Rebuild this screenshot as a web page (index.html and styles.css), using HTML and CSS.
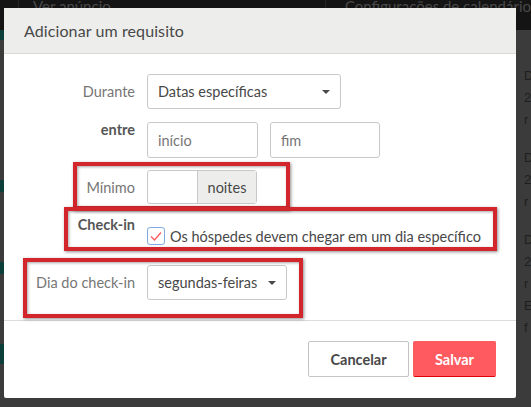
FILE: index.html
```html
<!DOCTYPE html>
<html lang="pt">
<head>
<meta charset="utf-8">
<title>Adicionar um requisito</title>
<link rel="stylesheet" href="styles.css">
</head>
<body>
<div class="page">
  <div class="topbar">
    <span class="tb-left">Ver anúncio</span>
    <span class="tb-right">Configurações de calendário</span>
  </div>
  <div class="pagebody">
    <div class="leftcol">
      <div class="stripe s1"></div>
      <div class="stripe s2"></div>
      <div class="stripe s3"></div>
      <div class="stripe s4"></div>
    </div>
    <div class="rightcol">
      <p>D</p><p>2</p><p>r</p>
      <p class="sep">D</p><p>2</p><p>r</p>
      <p class="sep">D</p><p>2</p><p>r</p><p>E</p><p>f</p>
    </div>
  </div>
</div>

<div class="modal">
  <div class="modal-header">Adicionar um requisito</div>
  <div class="modal-body">
    <div class="row r1">
      <label class="lbl">Durante</label>
      <div class="select sel-wide">Datas específicas<span class="caret"></span></div>
    </div>
    <div class="row r2">
      <label class="lbl bold top">entre</label>
      <div class="ctl pair">
        <div class="input in-start">início</div>
        <div class="input in-end">fim</div>
      </div>
    </div>
    <div class="row r3">
      <label class="lbl">Mínimo</label>
      <div class="group">
        <div class="group-input"></div>
        <div class="group-addon">noites</div>
      </div>
    </div>
    <div class="row r4">
      <label class="lbl bold top">Check-in</label>
      <div class="ctl check">
        <span class="box"><svg width="14" height="12" viewBox="0 0 14 12"><path d="M2 6.5 L5.5 10 L12 2.5" fill="none" stroke="#ff5a5f" stroke-width="1.3"/></svg></span>
        <span class="check-text">Os hóspedes devem chegar em um dia específico</span>
      </div>
    </div>
    <div class="row r5">
      <label class="lbl">Dia do check-in</label>
      <div class="select sel-narrow">segundas-feiras<span class="caret"></span></div>
    </div>
  </div>
  <div class="modal-footer">
    <button class="btn btn-cancel">Cancelar</button>
    <button class="btn btn-save">Salvar</button>
  </div>
</div>

<div class="mark m1"></div>
<div class="mark m2"></div>
<div class="mark m3"></div>
</body>
</html>
```

FILE: styles.css
```css
html, body {
  margin: 0;
  padding: 0;
}
body {
  width: 531px;
  height: 407px;
  overflow: hidden;
  background: #3b3b3b;
  font-family: "Lato", "Liberation Sans", sans-serif;
  position: relative;
}
.page {
  display: flex;
  flex-direction: column;
  height: 407px;
}
.topbar {
  height: 30px;
  background: #141414;
  display: flex;
  align-items: flex-start;
  font-size: 15px;
  color: #4a4a4a;
  line-height: 12px;
}
.tb-left {
  border-left: 1px solid #262626;
  padding-left: 14px;
  margin-left: 18px;
  height: 30px;
  width: 352px;
  border-right: 1px solid #262626;
}
.tb-right {
  margin-left: 19px;
  white-space: nowrap;
}
.pagebody {
  flex: 1;
  display: flex;
  justify-content: space-between;
}
.leftcol {
  width: 4px;
  display: flex;
  flex-direction: column;
}
.stripe { background: #0d3f3a; height: 12px; }
.s1 { margin-top: 0; height: 10px; }
.s2 { margin-top: 140px; }
.s3 { margin-top: 70px; }
.s4 { margin-top: 70px; height: 20px; }
.rightcol {
  width: 7px;
  padding-top: 35px;
  font-family: "Liberation Sans", sans-serif;
  font-size: 13px;
  color: #1e1e1e;
}
.rightcol p { margin: 0; line-height: 22px; }
.rightcol .sep { margin-top: 16px; }

.modal {
  position: absolute;
  left: 4px;
  top: 8px;
  width: 512px;
  height: 390px;
  background: #fff;
  border-radius: 2px;
  display: flex;
  flex-direction: column;
}
.modal-header {
  height: 45px;
  background: #edeeec;
  border-bottom: 1px solid #d9dad8;
  color: #484848;
  font-size: 16px;
  line-height: 45px;
  padding-left: 20px;
  letter-spacing: 0.1px;
}
.modal-body {
  padding: 20px 0 20px 0;
  border-bottom: 1px solid #dcdcdc;
  display: flex;
  flex-direction: column;
}
.row {
  display: flex;
  align-items: center;
}
.lbl {
  width: 131px;
  margin-right: 12px;
  text-align: right;
  font-size: 14.5px;
  color: #767676;
}
.lbl.bold {
  font-weight: 700;
  color: #565656;
}
.lbl.top { align-self: flex-start; line-height: 16px; }
.r1 { height: 35px; }
.r2 { height: 36px; margin-top: 13px; }
.r3 { height: 34px; margin-top: 12px; }
.r4 { height: 30px; margin-top: 13px; align-items: flex-start; }
.r5 { height: 35px; margin-top: 18px; }

.select, .input {
  box-sizing: border-box;
  border: 1px solid #c8c8c8;
  border-radius: 3px;
  font-size: 14.5px;
  color: #484848;
  padding-left: 10px;
  display: flex;
  align-items: center;
  position: relative;
  height: 100%;
}
.sel-wide { width: 194px; }
.sel-narrow { width: 140px; }
.caret {
  position: absolute;
  right: 10px;
  top: 50%;
  margin-top: -2px;
  width: 0;
  height: 0;
  border-left: 4px solid transparent;
  border-right: 4px solid transparent;
  border-top: 4px solid #484848;
}
.pair {
  display: flex;
  gap: 12px;
  height: 100%;
}
.in-start { width: 111px; color: #767676; }
.in-end { width: 110px; color: #767676; }
.group {
  display: flex;
  height: 100%;
  box-sizing: border-box;
  border: 1px solid #c8c8c8;
  border-radius: 3px;
  width: 110px;
}
.group-input { width: 49px; }
.group-addon {
  flex: 1;
  background: #edeeec;
  border-left: 1px solid #c8c8c8;
  font-size: 14.5px;
  color: #484848;
  display: flex;
  align-items: center;
  justify-content: center;
}
.check {
  display: flex;
  align-items: center;
  padding-top: 10px;
}
.box {
  box-sizing: border-box;
  width: 18px;
  height: 18px;
  border: 1.5px solid #7ea7e6;
  border-radius: 3px;
  display: flex;
  align-items: center;
  justify-content: center;
  margin-right: 5px;
}
.check-text {
  font-size: 14.5px;
  color: #484848;
}
.modal-footer {
  display: flex;
  justify-content: flex-end;
  align-items: flex-start;
  gap: 4px;
  padding: 20px 20px 0 0;
}
.btn {
  box-sizing: border-box;
  height: 36px;
  border-radius: 2px;
  font-family: inherit;
  font-size: 14.5px;
  font-weight: 700;
  cursor: pointer;
}
.btn-cancel {
  width: 101px;
  background: #fff;
  border: 1px solid #c4c4c4;
  color: #484848;
}
.btn-save {
  width: 83px;
  background: #ff5a5f;
  border: 1px solid #ff5a5f;
  border-bottom: 1px solid #e00007;
  color: #fff;
}

.mark {
  position: absolute;
  box-sizing: border-box;
  border: 4px solid #d2262c;
  box-shadow: 1px 1px 3px rgba(0,0,0,0.45), inset 1px 1px 3px rgba(0,0,0,0.35);
}
.m1 { left: 73px; top: 162px; width: 217px; height: 48px; }
.m2 { left: 64px; top: 207px; width: 433px; height: 44px; }
.m3 { left: 23px; top: 258px; width: 280px; height: 60px; }
```
